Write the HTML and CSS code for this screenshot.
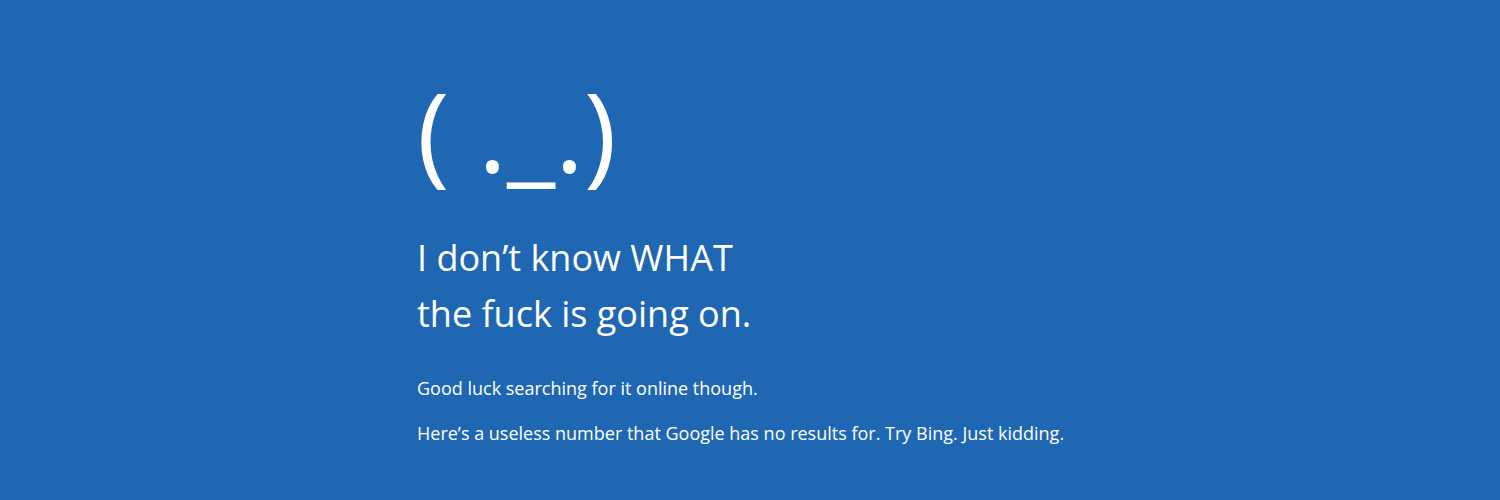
FILE: index.html
```html
<!DOCTYPE html>
<html lang="en">
<head>
  <meta charset="UTF-8" />
  <title>Stop code</title>
  <link rel="stylesheet" href="styles.css">
</head>
<body>
  <main class="screen">
    <div class="face">( ._.)</div>
    <h1 class="title">I don’t know WHAT<br>the fuck is going on.</h1>
    <p class="note">Good luck searching for it online though.</p>
    <p class="note">Here’s a useless number that Google has no results for. Try Bing. Just kidding.</p>
  </main>
</body>
</html>
```

FILE: styles.css
```css
html, body {
  margin: 0;
  height: 100%;
}

body {
  background: #2067b3;
  color: #fff;
  font-family: "Open Sans", "Noto Sans", sans-serif;
  overflow: hidden;
}

.screen {
  padding: 60px 0 0 417px;
}

.face {
  font-size: 110px;
  font-weight: 400;
  line-height: 140px;
  white-space: pre;
}

.title {
  margin: 30px 0 33px;
  font-size: 36px;
  font-weight: 400;
  line-height: 56px;
}

.note {
  margin: 0 0 19px;
  font-size: 18px;
  line-height: 26px;
}
```
